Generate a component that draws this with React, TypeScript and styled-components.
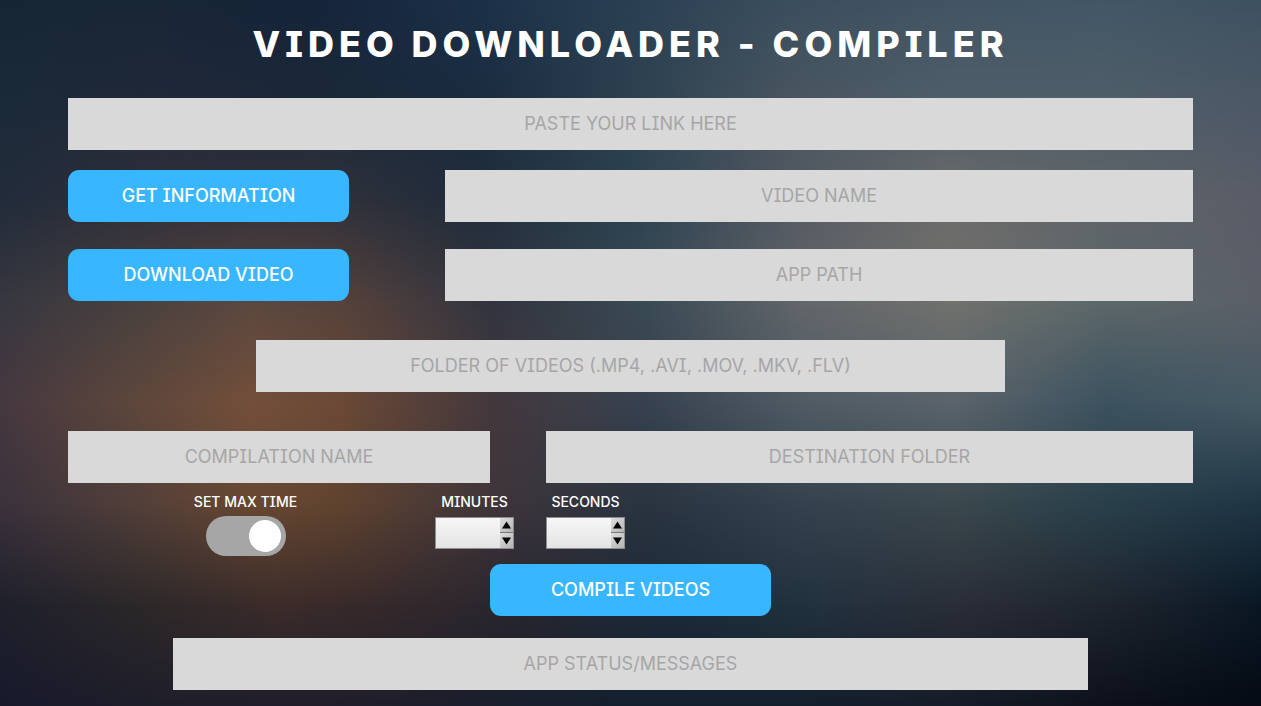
import React, { useId, useState } from "react";
import styled, { createGlobalStyle } from "styled-components";

const GlobalStyle = createGlobalStyle`
  * { box-sizing: border-box; }
  body {
    margin: 0;
    background: #17212f;
    font-family: Inter, "Liberation Sans", sans-serif;
    font-feature-settings: "cv08";
  }
`;

const Page = styled.main`
  position: relative;
  isolation: isolate;
  min-height: 100vh;
  padding: 20px 68px 16px;
  overflow: hidden;
`;

const Backdrop = styled.div`
  position: absolute;
  inset: 0;
  z-index: -1;
`;

/* Each band fades in from the one above, so the stack blends in both directions. */
const Band = styled.div<{ $colors: string; $from: number; $to: number }>`
  position: absolute;
  inset: 0;
  background: linear-gradient(to right, ${(p) => p.$colors});
  mask-image: ${(p) =>
    p.$to > 0
      ? `linear-gradient(to bottom, transparent ${p.$from}%, #000 ${p.$to}%)`
      : "none"};
`;

const bands = [
  "#172634,#182636,#16243a,#1b3048,#2a4052,#3b4e5e,#425464,#435767,#3e5160",
  "#1b2a39,#20283a,#1b2838,#1a2b3e,#2c4050,#48555f,#4f5e69,#4f5e68,#4c5866",
  "#222c3a,#32303a,#33323b,#202c3a,#2b4250,#535862,#6c6b6a,#606469,#5a5d68",
  "#373740,#48403f,#5c483f 20%,#56423b 27%,#323440,#3a4a54,#62666a,#70716d,#5b6769,#5b5f68",
  "#463840,#5c463c,#734f3a 20%,#6b4936 27%,#43383d,#374250,#4f5b64,#5a636b,#3c525f,#445963",
  "#3b323c,#503e3a,#684832 20%,#60432f 27%,#3f353b,#293440,#34424e,#3b484e,#29404a,#1f3545",
  "#1f202c,#2c2829,#3c2c2a 22%,#36292b 30%,#27262f,#1c2a39,#23323e,#2a2d37,#1e242e,#0a1824",
  "#181a2c,#1e1e2a,#211e2a,#1b1e2c,#13202f,#13202e,#161c28,#0d111c,#050a14",
];

const Title = styled.h1`
  margin: 0 0 30px;
  color: #fff;
  font-size: 36px;
  font-weight: 800;
  line-height: 48px;
  letter-spacing: 5px;
  text-align: center;
`;

const Form = styled.form`
  display: flex;
  flex-direction: column;
`;

const Row = styled.div<{ $columns: string; $gap?: number; $top?: number }>`
  display: grid;
  grid-template-columns: ${(p) => p.$columns};
  column-gap: ${(p) => p.$gap ?? 0}px;
  margin-top: ${(p) => p.$top ?? 0}px;
`;

const TextField = styled.input<{ $width?: string; $top?: number }>`
  width: ${(p) => p.$width ?? "100%"};
  min-width: 0;
  height: 52px;
  margin: ${(p) => p.$top ?? 0}px auto 0;
  padding: 0 16px 2px;
  border: 0;
  border-radius: 0;
  background: #d9d9d9;
  color: #444;
  font: inherit;
  font-feature-settings: inherit;
  font-size: 18px;
  text-align: center;
  &::placeholder { color: #a6a6a6; opacity: 1; }
`;

const Button = styled.button<{ $width?: string; $top?: number }>`
  width: ${(p) => p.$width ?? "100%"};
  height: 52px;
  margin: ${(p) => p.$top ?? 0}px auto 0;
  padding: 0 0 2px;
  border: 0;
  border-radius: 11px;
  background: #38b6ff;
  color: #fff;
  font: inherit;
  font-feature-settings: inherit;
  font-size: 18px;
  font-weight: 500;
  cursor: pointer;
`;

const Field = styled.div<{ $padRight?: number }>`
  display: flex;
  flex-direction: column;
  align-items: center;
  justify-self: ${(p) => (p.$padRight ? "stretch" : "start")};
  padding-right: ${(p) => p.$padRight ?? 0}px;
`;

const Label = styled.label`
  color: #fff;
  font-size: 14px;
  font-weight: 500;
  line-height: 18px;
  white-space: nowrap;
`;

const Toggle = styled.input`
  appearance: none;
  display: flex;
  align-items: center;
  width: 80px;
  height: 40px;
  margin: 5px 0 0;
  padding: 0 5px;
  border-radius: 20px;
  background: #a6a6a6;
  cursor: pointer;
  &::before {
    content: "";
    width: 32px;
    height: 32px;
    border-radius: 50%;
    background: #fff;
  }
  &:checked { justify-content: flex-end; }
`;

const Spinner = styled.div`
  display: flex;
  width: 79px;
  height: 32px;
  margin-top: 6px;
  border: 1px solid #8d8d8f;
  background: linear-gradient(#f6f6f6, #e4e4e4);
`;

const SpinnerInput = styled.input`
  flex: 1;
  min-width: 0;
  padding: 0 6px;
  border: 0;
  background: transparent;
  font: inherit;
  font-size: 14px;
  appearance: textfield;
  &::-webkit-inner-spin-button { appearance: none; margin: 0; }
`;

const Steps = styled.div`
  display: grid;
  grid-template-rows: 1fr 1fr;
  width: 13px;
`;

const Step = styled.button`
  display: flex;
  align-items: center;
  justify-content: center;
  padding: 0;
  border: 0;
  border-bottom: 1px solid #77787a;
  background: linear-gradient(135deg, #dedede, #b4b4b4);
  &:last-child { border-bottom: 0; }
`;

function TimeField({ label }: { label: string }) {
  const id = useId();
  const [value, setValue] = useState("");
  const step = (by: number) => setValue(String(Math.max(0, Number(value) + by)));
  return (
    <Field>
      <Label htmlFor={id}>{label}</Label>
      <Spinner>
        <SpinnerInput id={id} type="number" min={0} value={value} onChange={(e) => setValue(e.target.value)} />
        <Steps>
          <Step type="button" aria-label={`Increase ${label}`} onClick={() => step(1)}>
            <svg width="9" height="8" viewBox="0 0 9 8"><path d="M4.5 0.5 9 7.5H0z" /></svg>
          </Step>
          <Step type="button" aria-label={`Decrease ${label}`} onClick={() => step(-1)}>
            <svg width="9" height="8" viewBox="0 0 9 8"><path d="M4.5 7.5 0 0.5h9z" /></svg>
          </Step>
        </Steps>
      </Spinner>
    </Field>
  );
}

function Entry({ text, width, top }: { text: string; width?: string; top?: number }) {
  return <TextField type="text" placeholder={text} aria-label={text} $width={width} $top={top} />;
}

export default function App() {
  return (
    <Page>
      <GlobalStyle />
      <Backdrop>
        {bands.map((colors, i) => (
          <Band key={colors} $colors={colors} $from={((i - 1) * 100) / 7} $to={(i * 100) / 7} />
        ))}
      </Backdrop>
      <Title>VIDEO DOWNLOADER - COMPILER</Title>
      <Form onSubmit={(e) => e.preventDefault()}>
        <Entry text="PASTE YOUR LINK HERE" />
        <Row $columns="281fr 748fr" $gap={96} $top={20}>
          <Button type="button">GET INFORMATION</Button>
          <Entry text="VIDEO NAME" />
        </Row>
        <Row $columns="281fr 748fr" $gap={96} $top={27}>
          <Button type="button">DOWNLOAD VIDEO</Button>
          <Entry text="APP PATH" />
        </Row>
        <Entry text="FOLDER OF VIDEOS (.MP4, .AVI, .MOV, .MKV, .FLV)" width="66.5%" top={39} />
        <Row $columns="422fr 647fr" $gap={56} $top={39}>
          <Entry text="COMPILATION NAME" />
          <Entry text="DESTINATION FOLDER" />
        </Row>
        <Row $columns="367fr 111fr 647fr" $top={10}>
          <Field $padRight={12}>
            <Label htmlFor="max-time">SET MAX TIME</Label>
            <Toggle id="max-time" type="checkbox" defaultChecked />
          </Field>
          <TimeField label="MINUTES" />
          <TimeField label="SECONDS" />
        </Row>
        <Button type="submit" $width="25%" $top={8}>COMPILE VIDEOS</Button>
        <Entry text="APP STATUS/MESSAGES" width="81.25%" top={22} />
      </Form>
    </Page>
  );
}
